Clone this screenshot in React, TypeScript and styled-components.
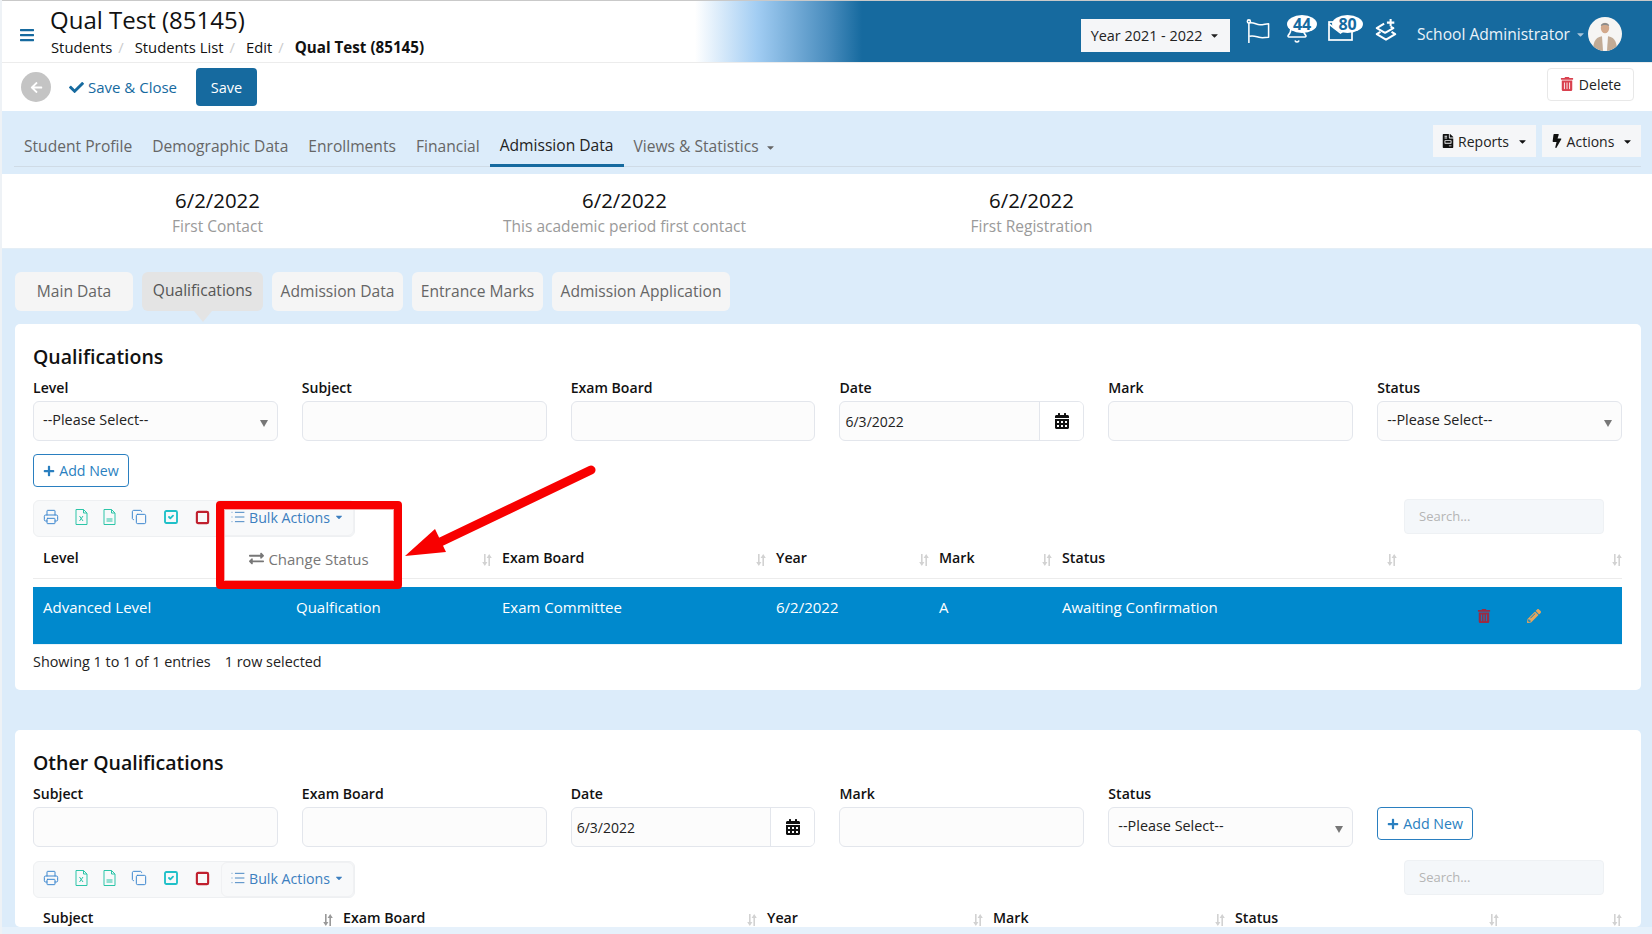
import React from "react";
import styled, { createGlobalStyle } from "styled-components";
import { Bell, Printer, Copy, SquareCheck, Square, List } from "lucide-react";
import { FaBars, FaCheck, FaArrowLeft, FaTrashAlt, FaCalendarAlt, FaBolt, FaExchangeAlt, FaPencilAlt, FaFileInvoice, FaPlus, FaCaretDown } from "react-icons/fa";

const Global = createGlobalStyle`
  html, body { margin: 0; padding: 0; height: 100%; background: #fff; }
  #root { height: 100%; }
  * { box-sizing: border-box; }
  body { font-family: "Open Sans", "Liberation Sans", sans-serif; font-size: 14px; color: #111; overflow: hidden; }
`;

const Page = styled.div`
  width: 1652px; height: 934px; display: flex; flex-direction: column;
  border-left: 2px solid #eef2f6; overflow: hidden; background: #dcecfa;
`;
const Main = styled.div`flex: 1; overflow: hidden; min-height: 0;`;
const FooterStrip = styled.div`height: 7px; background: #e6f1fb;`;

const Header = styled.header`
  height: 62px; border-top: 1px solid #c9c9c9; display: flex; align-items: center;
  padding-left: 17px; padding-right: 30px; flex: none;
  background: linear-gradient(90deg, #fff 693px, #a2cdf3 755px, #4a8dbe 826px, #166a9f 860px);
`;
const Burger = styled.div`color: #166a9f; font-size: 16px; display: flex; width: 31px; margin-top: 7px;`;
const TitleBlock = styled.div`display: flex; flex-direction: column; flex: 1;`;
const Title = styled.div`font-size: 24px; line-height: 30px; color: #111; margin-top: -1px;`;
const Crumbs = styled.div`display: flex; font-size: 14.8px; line-height: 20px; margin-top: 2px; color: #111; padding-left: 1px;`;
const Crumb = styled.span<{ $bold?: boolean }>`
  font-weight: ${p => (p.$bold ? 700 : 400)}; margin-right: 11px; font-size: ${p => (p.$bold ? "15.2px" : "14.8px")};
  &::after { content: ${p => (p.$bold ? "''" : "'/'")}; color: #ccc; margin-left: 6px; }
`;
const YearSelect = styled.div`
  width: 149px; height: 33px; background: #f5f6f8; display: flex; align-items: center;
  justify-content: center; gap: 7px; font-size: 14.4px; color: #222; margin-top: 7px;
  svg { font-size: 11px; }
`;
const HeaderIcons = styled.div`display: flex; align-items: flex-start; margin-left: 16px; height: 36px; color: #fff;`;
const HeaderIcon = styled.div<{ $w: number; $pb?: number }>`
  position: relative; width: ${p => p.$w}px; height: 36px; display: flex; align-items: flex-end; margin-top: -4px;
  padding-bottom: ${p => p.$pb ?? 0}px;
`;
const Badge = styled.span<{ $left: number; $w: number }>`
  position: absolute; top: 5px; left: ${p => p.$left}px; width: ${p => p.$w}px; height: 18px; border-radius: 50%;
  background: #fff; color: #166a9f; font-weight: 700; font-size: 16px; line-height: 18px; text-align: center;
`;
const User = styled.div`
  display: flex; align-items: center; color: #eaf3fa; font-size: 15.6px; margin-left: 19px; margin-top: 5px;
  svg.c { font-size: 11px; color: #a9c5da; margin: 0 2px 0 5px; }
`;

const ActionBar = styled.div`
  height: 49px; background: #fff; border-top: 1px solid #ececec; display: flex; align-items: center;
  padding: 0 18px 0 19px; flex: none; position: relative;
`;
const BackCircle = styled.div`
  width: 30px; height: 30px; border-radius: 50%; background: #c4c4c4; color: #fff; display: flex;
  align-items: center; justify-content: center; font-size: 13px;
`;
const SaveClose = styled.div`
  display: flex; align-items: center; gap: 4px; color: #166a9f; font-size: 15px; margin-left: 18px;
  svg { font-size: 15px; }
`;
const SaveBtn = styled.div`
  width: 61px; height: 38px; border-radius: 4px; background: #166a9f; color: #fff; display: flex; align-items: center;
  justify-content: center; font-size: 14.5px; margin-left: 19px;
`;
const DeleteBtn = styled.div`
  margin-left: auto; width: 87px; height: 33px; border: 1px solid #e8e8e8; border-radius: 4px; background: #fff;
  display: flex; align-items: center; justify-content: center; gap: 5px; font-size: 14px; color: #222; margin-top: -6px;
  svg { color: #d9414f; font-size: 14px; }
`;

const NavArea = styled.div`height: 63px; padding: 0 11px 0 12px; background: #dcecfa; flex: none;`;
const NavInner = styled.nav`
  height: 56px; border-bottom: 1px solid #cfdbe6; display: flex; align-items: flex-end;
`;
const NavItem = styled.div<{ $active?: boolean }>`
  height: 33px; padding: 0 10px; font-size: 15.6px; color: ${p => (p.$active ? "#222" : "#666")};
  margin-bottom: -1px; line-height: ${p => (p.$active ? "23px" : "24px")}; white-space: nowrap;
  border-bottom: 3px solid ${p => (p.$active ? "#166a9f" : "transparent")};
  svg { font-size: 11px; margin-left: 6px; vertical-align: -1px; }
`;
const NavRight = styled.div`margin-left: auto; display: flex; gap: 6px; align-self: flex-end; margin-bottom: 9px;`;
const NavButton = styled.div<{ $w: number }>`
  width: ${p => p.$w}px; height: 32px; background: #f5f6f8; display: flex; align-items: center; justify-content: center;
  gap: 3px; font-size: 14px; color: #222; svg { font-size: 14px; color: #111; } svg.c { font-size: 11px; margin-left: 5px; }
`;

const Stats = styled.div`
  height: 75px; background: #fff; border-bottom: 1px solid #e4eef6; display: grid; grid-template-columns: repeat(3, 407px);
  padding-left: 12px; flex: none; align-items: start;
`;
const Stat = styled.div`display: flex; flex-direction: column; align-items: center; padding-top: 13px;`;
const StatValue = styled.div`font-size: 20.4px; line-height: 26px; color: #111;`;
const StatLabel = styled.div`font-size: 15.5px; line-height: 26px; color: #9a9a9a;`;

const SubTabs = styled.div`display: flex; gap: 9px; padding: 23px 0 0 13px; height: 62px;`;
const SubTab = styled.div<{ $active?: boolean; $w: number }>`
  position: relative; width: ${p => p.$w}px; height: 39px; border-radius: 6px; text-align: center; font-size: 15.6px;
  line-height: ${p => (p.$active ? "36px" : "39px")}; color: ${p => (p.$active ? "#555" : "#666")};
  background: ${p => (p.$active ? "#e4e4e4" : "#f5f5f5")};
  ${p => (p.$active ? `&::after { content: ""; position: absolute; left: 50%; margin-left: -9px; top: 100%; border: 9px solid transparent; border-top: 11px solid #e4e4e4; border-bottom: 0; }` : "")}
`;

const Card = styled.section<{ $mt: number; $h: number }>`
  position: relative; margin: ${p => p.$mt}px 11px 0 13px; height: ${p => p.$h}px; background: #fff; border-radius: 5px;
  padding: 20px 19px 0 18px;
`;
const CardTitle = styled.h2`margin: 0 0 10px; font-size: 19.5px; line-height: 26px; font-weight: 600; color: #111;`;
const FormGrid = styled.div`display: grid; grid-template-columns: repeat(6, 1fr); column-gap: 24px;`;
const Field = styled.div`display: flex; flex-direction: column;`;
const Label = styled.label`font-size: 14.1px; line-height: 16px; font-weight: 600; margin-bottom: 5px; color: #111;`;
const Spacer = styled.div`height: 21px;`;
const InputBox = styled.div`
  height: 40px; border: 1px solid #e3e6ec; border-radius: 6px; background: #fcfcfc; display: flex; align-items: center;
  font-size: 14.4px; color: #222; position: relative; overflow: hidden;
`;
const SelectText = styled.span`padding: 0 0 4px 9px;`;
const SelectArrow = styled.span`
  position: absolute; right: 9px; top: 18px; border: 4px solid transparent; border-top: 7px solid #777; border-bottom: 0;
`;
const DateText = styled.span`flex: 1; padding-left: 5px; padding-top: 1px; font-size: 14px;`;
const CalBtn = styled.span`
  width: 44px; height: 100%; border-left: 1px solid #e3e6ec; display: flex; align-items: center; justify-content: center; font-size: 16px; color: #111;
  background: #fff;
`;
const AddNew = styled.div`
  width: 96px; height: 33px; border: 1px solid #2a7fc0; border-radius: 4px; display: flex; align-items: center; justify-content: center;
  gap: 4px; color: #2a7fc0; font-size: 14.2px; background: #fff; svg { font-size: 12px; }
`;
const AddRow = styled.div`margin-top: 13px;`;
const ToolRow = styled.div<{ $mt: number }>`display: flex; justify-content: space-between; position: relative; margin-top: ${p => p.$mt}px;`;
const ToolBar = styled.div`
  height: 37px; width: 322px; background: #f8f9fa; border: 1px solid #eef0f2; border-radius: 6px; display: flex; align-items: center; padding-left: 9px;
`;
const ToolIcon = styled.div<{ $c: string; $w: number }>`
  flex: none; width: ${p => p.$w}px; display: flex; justify-content: flex-start; color: ${p => p.$c}; margin-top: -3px;
`;
const BulkWrap = styled.div`position: relative; flex: none; margin-top: -1px;`;
const BulkBtn = styled.div`
  width: 133px; height: 35px; background: #f8f9fa; border: 1px solid #f0f1f3; border-radius: 6px; display: flex; align-items: center; justify-content: center;
  gap: 3px; color: #3c7fbf; font-size: 14.2px; padding-bottom: 2px; svg.c { font-size: 10px; margin-left: 1px; }
`;
const Menu = styled.div`
  position: absolute; top: 36px; left: 2px; width: 171px; height: 44px; background: #fff; display: flex; align-items: center; justify-content: center;
  gap: 4px; color: #777; font-size: 15px; z-index: 2; padding-left: 2px; svg { font-size: 15px; }
`;
const RedBox = styled.div`
  position: absolute; left: -5px; top: 0; width: 186px; height: 88px; border: 8px solid #f80000; border-radius: 4px; z-index: 3;
  box-shadow: inset 0 0 0 1px #f5a5a5;
`;
const SearchBox = styled.div`
  width: 200px; height: 35px; margin-right: 18px; background: #f4f7fa; border: 1px solid #eef1f4; border-radius: 4px; color: #b5b5b5; font-size: 13px;
  display: flex; align-items: center; padding: 0 0 2px 14px; margin-top: -1px;
`;
const HeadRow = styled.div<{ $cols: string }>`
  display: grid; grid-template-columns: ${p => p.$cols}; height: 42px; border-bottom: 1px solid #ececec; font-weight: 600; font-size: 14.2px; color: #111;
`;
const RaisedHeadRow = styled(HeadRow)`margin-top: -1px;`;
const HeadCell = styled.div`
  position: relative; padding: 12px 0 0 10px; line-height: 18px; display: flex; justify-content: space-between;
`;
const SortBox = styled.span<{ $dark?: boolean }>`
  display: flex; margin-top: 5px; margin-right: 0; color: ${p => (p.$dark ? "#999" : "#d2d2d2")}; height: 12px;
`;
const DataRow = styled.div<{ $cols: string }>`
  display: grid; grid-template-columns: ${p => p.$cols}; height: 58px; margin-top: 8px; background: #0089cd; color: #fff; font-size: 15px;
  border-bottom: 1px solid #e9f3f9;
`;
const DataCell = styled.div`padding: 9px 0 0 10px; line-height: 22px;`;
const RowActions = styled.div`display: flex; align-items: flex-start; padding: 22px 0 0 80px; gap: 36px; font-size: 14px;`;
const TrashCell = styled.span`color: #9b2b43; display: flex;`;
const PencilCell = styled.span`color: #e8a65b; display: flex;`;
const TableInfo = styled.div`display: flex; gap: 14px; line-height: 20px; padding-top: 7px; font-size: 14.4px; color: #222;`;
const ArrowSvg = styled.svg`position: absolute; left: 370px; top: 130px; z-index: 4;`;

const SortIcon = ({ dark }: { dark?: boolean }) => (
  <SortBox $dark={dark}>
    <svg width="10" height="12" viewBox="0 0 10 12" fill="currentColor">
      <path d="M2 0h1.6v8H5.4L2.8 12 .2 8H2z" />
      <path d="M6.4 12H8V4h1.8L7.2 0 4.6 4h1.8z" />
    </svg>
  </SortBox>
);

const FlagIcon = () => (
  <svg width="25" height="25" viewBox="0 0 25 26" fill="none" stroke="#fff" strokeWidth="1.6">
    <circle cx="2.5" cy="2.5" r="1.6" />
    <path d="M2.5 4v21" />
    <path d="M3 4c5-1 7 2 11 2 4 0 6-1 9-1v14c-4 0-6 1-10 0-4-1-6-2-10-1" strokeLinejoin="round" />
  </svg>
);
const MailIcon = () => (
  <svg width="25" height="20" viewBox="0 0 25 20" fill="none" stroke="#fff" strokeWidth="1.7">
    <rect x="1" y="1" width="23" height="18" />
    <path d="M1 3l11.5 9L24 3" />
  </svg>
);
const LayersPlus = () => (
  <svg width="24" height="24" viewBox="0 0 24 26" fill="none" stroke="#fff" strokeWidth="2.2">
    <path d="M17 1v8M13 5h8" />
    <path d="M10 6L2 11l9 5 9-5-3-1.7" strokeLinejoin="round" />
    <path d="M6 15l-4 2.5 10 6 10-6-4-2.5" strokeLinejoin="round" />
  </svg>
);
const Avatar = () => (
  <svg width="34" height="34" viewBox="0 0 34 34">
    <defs><clipPath id="av"><circle cx="17" cy="17" r="17" /></clipPath></defs>
    <circle cx="17" cy="17" r="17" fill="#f6f5f3" />
    <g clipPath="url(#av)">
      <path d="M5 34c0-10 3-15 12-15s12 5 12 15z" fill="#c2ab95" />
      <path d="M14 19h6l-1 15h-4z" fill="#f7f7f7" />
      <ellipse cx="17" cy="11" rx="4.2" ry="5.2" fill="#d3a98c" />
      <path d="M12.8 9c0-4 8.4-4 8.4 0-2-1.5-6.4-1.5-8.4 0z" fill="#8c8c8c" />
    </g>
  </svg>
);
const DocIcon = ({ c, mark }: { c: string; mark: React.ReactNode }) => (
  <svg width="13" height="16" viewBox="0 0 13 16" fill="none" stroke={c} strokeWidth="1">
    <path d="M1 .5h7.5L12 4v11.5H1z" />
    <path d="M8.5.5V4H12" />
    {mark}
  </svg>
);

const Select = () => (
  <InputBox><SelectText>--Please Select--</SelectText><SelectArrow /></InputBox>
);
const DateInput = () => (
  <InputBox><DateText>6/3/2022</DateText><CalBtn><FaCalendarAlt /></CalBtn></InputBox>
);

const Tools = () => (
  <>
    <ToolIcon $c="#3c87cf" $w={31.5}><Printer size={16} strokeWidth={1.5} /></ToolIcon>
    <ToolIcon $c="#2cc5a8" $w={28.5}><DocIcon c="#2cc5a8" mark={<path d="M4.5 7l3.5 5M8 7l-3.5 5" />} /></ToolIcon>
    <ToolIcon $c="#2cc5a8" $w={28}><DocIcon c="#2cc5a8" mark={<path d="M3.5 10h6M3.5 12h6" />} /></ToolIcon>
    <ToolIcon $c="#3c87cf" $w={32}><Copy size={16} strokeWidth={1.5} /></ToolIcon>
    <ToolIcon $c="#1fc0c8" $w={31.5}><SquareCheck size={16} strokeWidth={2.8} /></ToolIcon>
    <ToolIcon $c="#c0202e" $w={26}><Square size={15} strokeWidth={3.4} /></ToolIcon>
  </>
);
const BulkLabel = () => (
  <><List size={16} strokeWidth={1.4} />Bulk Actions<FaCaretDown className="c" /></>
);

const cols1 = "253px 206px 274px 163px 123px 345px 225px";
const cols2 = "300px 424px 226px 242px 274px 123px";

export default function App() {
  return (
    <>
      <Global />
      <Page>
        <Header>
          <Burger><FaBars /></Burger>
          <TitleBlock>
            <Title>Qual Test (85145)</Title>
            <Crumbs>
              <Crumb>Students</Crumb><Crumb>Students List</Crumb><Crumb>Edit</Crumb><Crumb $bold>Qual Test (85145)</Crumb>
            </Crumbs>
          </TitleBlock>
          <YearSelect>Year 2021 - 2022 <FaCaretDown /></YearSelect>
          <HeaderIcons>
            <HeaderIcon $w={39} $pb={2}><FlagIcon /></HeaderIcon>
            <HeaderIcon $w={43} $pb={2}><Bell size={24} strokeWidth={1.6} /><Badge $left={2} $w={30}>44</Badge></HeaderIcon>
            <HeaderIcon $w={46} $pb={5}><MailIcon /><Badge $left={4} $w={31}>80</Badge></HeaderIcon>
            <HeaderIcon $w={24} $pb={4}><LayersPlus /></HeaderIcon>
          </HeaderIcons>
          <User>School Administrator<FaCaretDown className="c" /><Avatar /></User>
        </Header>
        <ActionBar>
          <BackCircle><FaArrowLeft /></BackCircle>
          <SaveClose><FaCheck />Save &amp; Close</SaveClose>
          <SaveBtn>Save</SaveBtn>
          <DeleteBtn><FaTrashAlt />Delete</DeleteBtn>
        </ActionBar>
        <NavArea>
          <NavInner>
            <NavItem>Student Profile</NavItem>
            <NavItem>Demographic Data</NavItem>
            <NavItem>Enrollments</NavItem>
            <NavItem>Financial</NavItem>
            <NavItem $active>Admission Data</NavItem>
            <NavItem>Views &amp; Statistics<FaCaretDown /></NavItem>
            <NavRight>
              <NavButton $w={103}><FaFileInvoice />Reports<FaCaretDown className="c" /></NavButton>
              <NavButton $w={99}><FaBolt />Actions<FaCaretDown className="c" /></NavButton>
            </NavRight>
          </NavInner>
        </NavArea>
        <Main>
          <Stats>
            <Stat><StatValue>6/2/2022</StatValue><StatLabel>First Contact</StatLabel></Stat>
            <Stat><StatValue>6/2/2022</StatValue><StatLabel>This academic period first contact</StatLabel></Stat>
            <Stat><StatValue>6/2/2022</StatValue><StatLabel>First Registration</StatLabel></Stat>
          </Stats>
          <SubTabs>
            <SubTab $w={118}>Main Data</SubTab>
            <SubTab $w={121} $active>Qualifications</SubTab>
            <SubTab $w={131}>Admission Data</SubTab>
            <SubTab $w={131}>Entrance Marks</SubTab>
            <SubTab $w={178}>Admission Application</SubTab>
          </SubTabs>
          <Card $mt={13} $h={366}>
            <CardTitle>Qualifications</CardTitle>
            <FormGrid>
              <Field><Label>Level</Label><Select /></Field>
              <Field><Label>Subject</Label><InputBox /></Field>
              <Field><Label>Exam Board</Label><InputBox /></Field>
              <Field><Label>Date</Label><DateInput /></Field>
              <Field><Label>Mark</Label><InputBox /></Field>
              <Field><Label>Status</Label><Select /></Field>
            </FormGrid>
            <AddRow><AddNew><FaPlus />Add New</AddNew></AddRow>
            <ToolRow $mt={13}>
              <ToolBar>
                <Tools />
                <BulkWrap>
                  <BulkBtn><BulkLabel /></BulkBtn>
                  <Menu><FaExchangeAlt />Change Status</Menu>
                  <RedBox />
                </BulkWrap>
              </ToolBar>
              <SearchBox>Search...</SearchBox>
            </ToolRow>
            <HeadRow $cols={cols1}>
              <HeadCell>Level</HeadCell>
              <HeadCell><span /><SortIcon /></HeadCell>
              <HeadCell>Exam Board<SortIcon /></HeadCell>
              <HeadCell>Year<SortIcon /></HeadCell>
              <HeadCell>Mark<SortIcon /></HeadCell>
              <HeadCell>Status<SortIcon /></HeadCell>
              <HeadCell><span /><SortIcon /></HeadCell>
            </HeadRow>
            <DataRow $cols={cols1}>
              <DataCell>Advanced Level</DataCell>
              <DataCell>Qualfication</DataCell>
              <DataCell>Exam Committee</DataCell>
              <DataCell>6/2/2022</DataCell>
              <DataCell>A</DataCell>
              <DataCell>Awaiting Confirmation</DataCell>
              <RowActions><TrashCell><FaTrashAlt /></TrashCell><PencilCell><FaPencilAlt /></PencilCell></RowActions>
            </DataRow>
            <TableInfo><span>Showing 1 to 1 of 1 entries</span><span>1 row selected</span></TableInfo>
            <ArrowSvg width="240" height="120" viewBox="370 130 240 120">
              <path d="M576 146L415 223" stroke="#f80000" strokeWidth="9" strokeLinecap="round" />
              <polygon points="390,232 420,205 431,228" fill="#f80000" />
            </ArrowSvg>
          </Card>
          <Card $mt={40} $h={197}>
            <CardTitle>Other Qualifications</CardTitle>
            <FormGrid>
              <Field><Label>Subject</Label><InputBox /></Field>
              <Field><Label>Exam Board</Label><InputBox /></Field>
              <Field><Label>Date</Label><DateInput /></Field>
              <Field><Label>Mark</Label><InputBox /></Field>
              <Field><Label>Status</Label><Select /></Field>
              <Field><Spacer /><AddNew><FaPlus />Add New</AddNew></Field>
            </FormGrid>
            <ToolRow $mt={14}>
              <ToolBar>
                <Tools />
                <BulkWrap><BulkBtn><BulkLabel /></BulkBtn></BulkWrap>
              </ToolBar>
              <SearchBox>Search...</SearchBox>
            </ToolRow>
            <RaisedHeadRow $cols={cols2}>
              <HeadCell>Subject<SortIcon dark /></HeadCell>
              <HeadCell>Exam Board<SortIcon /></HeadCell>
              <HeadCell>Year<SortIcon /></HeadCell>
              <HeadCell>Mark<SortIcon /></HeadCell>
              <HeadCell>Status<SortIcon /></HeadCell>
              <HeadCell><span /><SortIcon /></HeadCell>
            </RaisedHeadRow>
          </Card>
        </Main>
        <FooterStrip />
      </Page>
    </>
  );
}
